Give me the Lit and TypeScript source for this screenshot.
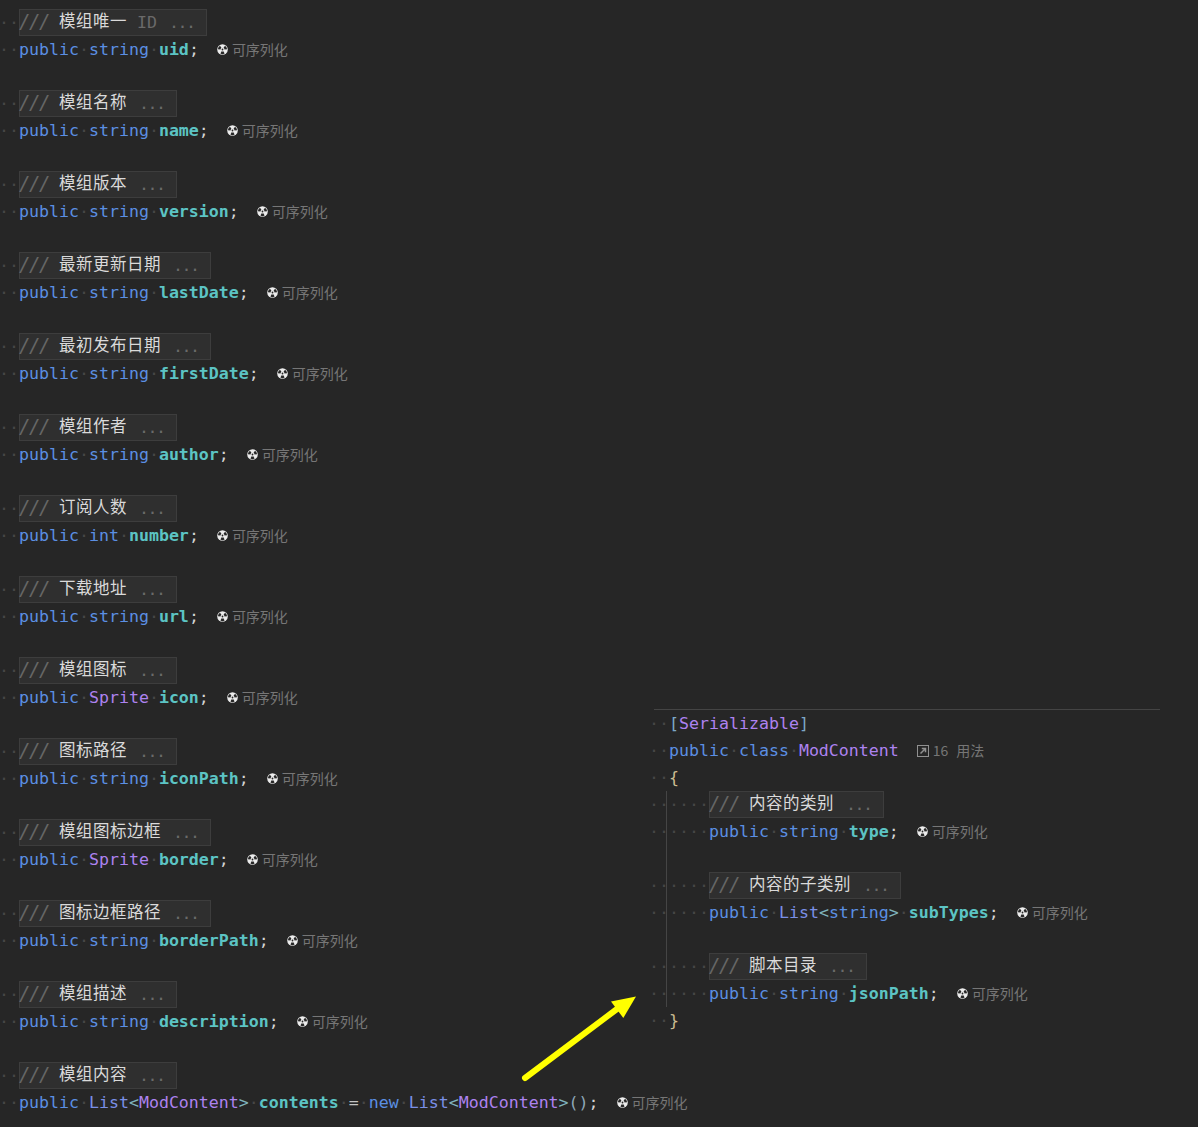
import { LitElement, html, css, svg, nothing } from "lit";
import { customElement } from "lit/decorators.js";

type Field = { zh: string; id?: boolean; type: string; name: string };

const FIELDS: Field[] = [
  { zh: "模组唯一", id: true, type: "string", name: "uid" },
  { zh: "模组名称", type: "string", name: "name" },
  { zh: "模组版本", type: "string", name: "version" },
  { zh: "最新更新日期", type: "string", name: "lastDate" },
  { zh: "最初发布日期", type: "string", name: "firstDate" },
  { zh: "模组作者", type: "string", name: "author" },
  { zh: "订阅人数", type: "int", name: "number" },
  { zh: "下载地址", type: "string", name: "url" },
  { zh: "模组图标", type: "Sprite", name: "icon" },
  { zh: "图标路径", type: "string", name: "iconPath" },
  { zh: "模组图标边框", type: "Sprite", name: "border" },
  { zh: "图标边框路径", type: "string", name: "borderPath" },
  { zh: "模组描述", type: "string", name: "description" },
];

const INNER: Field[] = [
  { zh: "内容的类别", type: "string", name: "type" },
  { zh: "内容的子类别", type: "List", name: "subTypes" },
  { zh: "脚本目录", type: "string", name: "jsonPath" },
];

const dots = (n: number) => html`<span class="ws">${"·".repeat(n)}</span>`;
const ws = html`<span class="ws">·</span>`;

const blade = (deg: number) => {
  const c = 5.5, r0 = 2, r1 = 4.6, h = 27;
  const p = (r: number, a: number) => {
    const t = (a * Math.PI) / 180;
    return `${(c + r * Math.cos(t)).toFixed(2)} ${(c - r * Math.sin(t)).toFixed(2)}`;
  };
  return `M${p(r0, deg - h)} L${p(r1, deg - h)} A${r1} ${r1} 0 0 0 ${p(r1, deg + h)} L${p(r0, deg + h)} A${r0} ${r0} 0 0 1 ${p(r0, deg - h)}Z`;
};

const radiation = html`<svg class="rad" width="11" height="11" viewBox="0 0 11 11">
  <circle cx="5.5" cy="5.5" r="5.3" fill="#ececec"></circle>
  <circle cx="5.5" cy="5.5" r="0.9" fill="#262626"></circle>
  ${[150, 30, 270].map(d => svg`<path d="${blade(d)}" fill="#262626"></path>`)}
</svg>`;

const hint = html`<span class="hint">${radiation}<span class="hint-t">可序列化</span></span>`;

const comment = (f: Field, indent: number) => html`<div class="row">${dots(indent)}<span class="box"><span class="sl">///</span> <span class="zh">${f.zh}</span>${f.id ? html` <span class="gr">ID</span>` : nothing} <span class="gr ell">...</span> </span></div>`;

const typeTok = (t: string) => {
  if (t === "Sprite") return html`<span class="ty">Sprite</span>`;
  if (t === "List") return html`<span class="cl">List</span><span class="op">&lt;</span><span class="kw">string</span><span class="op">&gt;</span>`;
  return html`<span class="kw">${t}</span>`;
};

const decl = (f: Field, indent: number) => html`<div class="row">${dots(indent)}<span class="kw">public</span>${ws}${typeTok(f.type)}${ws}<span class="nm">${f.name}</span><span class="pn">;</span>${hint}</div>`;

@customElement("app-root")
export class AppRoot extends LitElement {
  static styles = css`
    :host { display: block; width: 1198px; height: 1127px; background: #262626; position: relative; overflow: hidden;
      font-family: "DejaVu Sans Mono", "Noto Sans CJK SC", monospace; font-size: 16.6px; color: #d4d4d4; }
    .pane { padding-top: 9px; margin-left: -1px; }
    .row { height: 27px; line-height: 27px; white-space: pre; display: block; }
    .ws { color: #474747; }
    .kw { color: #5b8fe3; }
    .cl { color: #7a8fe6; }
    .ty { color: #ad82f0; }
    .nm { color: #5cc4c4; font-weight: 700; }
    .pn { color: #d4d4d4; }
    .op { color: #7fb2bc; }
    .eq { color: #c4c4c4; }
    .pr { color: #8fa8b8; }
    .lb { color: #7da7c7; }
    .br { color: #cdbd92; }
    .box { display: inline-block; height: 27px; line-height: 23px; vertical-align: top; background: #2f2f2f; box-shadow: inset 0 0 0 1px #3d3d3d; }
    .sl { color: #666; font-style: italic; font-size: 19px; letter-spacing: -1.44px; }
    .zh { font-family: "Noto Sans CJK SC", sans-serif; font-size: 16.5px; letter-spacing: 0.5px; color: #dadada; vertical-align: 1px; }
    .gr { color: #6a6a6a; }
    .ell { letter-spacing: -1.5px; margin-left: 2px; padding-right: 2.5px; }
    .hint { margin-left: 18px; display: inline-flex; align-items: center; height: 27px; vertical-align: top; }
    .rad { margin-right: 4px; }
    .hint-t { font-family: "Noto Sans CJK SC", sans-serif; font-size: 14px; color: #767676; }
    .panel { position: absolute; left: 654px; top: 709px; width: 506px; height: 340px; border-top: 1px solid #444; }
    .panel-in { margin-left: -5px; position: relative; }
    .guide { position: relative; }
    .guide::before { content: ""; position: absolute; left: 17px; top: 0; bottom: 0; width: 1px; background: #454545; }
    .refs { display: inline-flex; align-items: center; margin-left: 18px; height: 27px; vertical-align: top; font-size: 14px; color: #767676; font-family: "Noto Sans CJK SC", sans-serif; }
    .refs svg { margin-right: 4px; }
    .refs .lbl { margin-left: 8px; }
    .arrow { position: absolute; left: 515px; top: 985px; }
  `;

  render() {
    return html`
      <div class="pane">
        ${FIELDS.map(f => html`${comment(f, 2)}${decl(f, 2)}<div class="row"></div>`)}
        ${comment({ zh: "模组内容", type: "", name: "" }, 2)}
        <div class="row">${dots(2)}<span class="kw">public</span>${ws}<span class="cl">List</span><span class="op">&lt;</span><span class="ty">ModContent</span><span class="op">&gt;</span>${ws}<span class="nm">contents</span>${ws}<span class="eq">=</span>${ws}<span class="kw">new</span>${ws}<span class="cl">List</span><span class="op">&lt;</span><span class="ty">ModContent</span><span class="op">&gt;</span><span class="pr">()</span><span class="pn">;</span>${hint}</div>
      </div>
      <div class="panel">
        <div class="panel-in">
          <div class="row">${dots(2)}<span class="lb">[</span><span class="ty">Serializable</span><span class="lb">]</span></div>
          <div class="row">${dots(2)}<span class="kw">public</span>${ws}<span class="kw">class</span>${ws}<span class="ty">ModContent</span><span class="refs"><svg width="12" height="12" viewBox="0 0 12 12" fill="none" stroke="#909090"><rect x="0.5" y="0.5" width="11" height="11"></rect><path d="M3.5 8.5 L8 4 M4.8 3.5 H8.5 V7.2" stroke-width="1.5"></path></svg><span>16</span><span class="lbl">用法</span></span></div>
          <div class="row">${dots(2)}<span class="br">{</span></div>
          <div class="guide">
            ${INNER.map((f, i) => html`${comment(f, 6)}${decl(f, 6)}${i < 2 ? html`<div class="row"></div>` : nothing}`)}
          </div>
          <div class="row">${dots(2)}<span class="br">}</span></div>
        </div>
      </div>
      <svg class="arrow" width="130" height="105" viewBox="515 985 130 105">
        ${svg`<path d="M525 1078 L617 1009" stroke="#ffff00" stroke-width="6" stroke-linecap="round" fill="none"></path>
        <path d="M636 996.5 L611 1001.5 L623.3 1018 Z" fill="#ffff00"></path>`}
      </svg>
    `;
  }
}
